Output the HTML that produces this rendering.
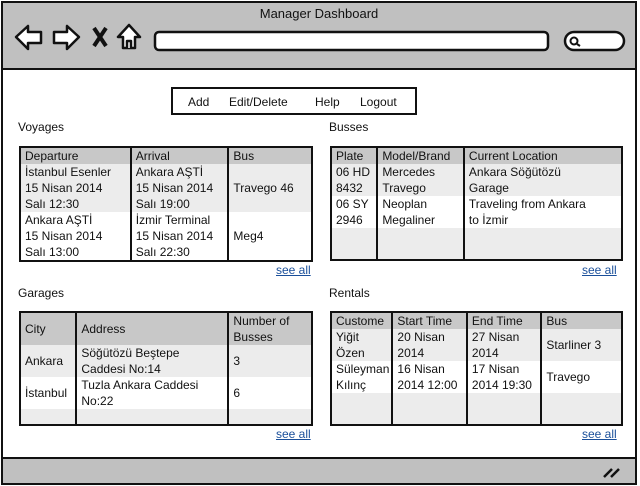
<!DOCTYPE html>
<html><head><meta charset="utf-8"><style>
*{margin:0;padding:0;box-sizing:border-box}
body{width:640px;height:486px;background:#fff;position:relative;overflow:hidden;font-family:"Liberation Sans",sans-serif;font-size:12px;color:#111}
.a{position:absolute}
.win{left:1px;top:1px;width:636px;height:484px;border:2px solid #111;background:#fff}
.hdr{left:3px;top:3px;width:632px;height:67px;background:#c0c0c0;border-bottom:2px solid #111}
.ftr{left:3px;top:457px;width:632px;height:26px;background:#c0c0c0;border-top:2px solid #111}
table{position:absolute;border-collapse:collapse;table-layout:fixed;border:2px solid #111;font-size:12px}
td{border-left:2px solid #111;padding:0 0 0 4px;line-height:16px;vertical-align:middle;white-space:nowrap;overflow:hidden}
td:first-child{border-left:none}
tr.h td{background:#c8c8c8}
tr.g td{background:#ececec}
tr.w td{background:#fff}
.lbl{font-size:12px}
.see{color:#1a4f9a;text-decoration:underline;font-size:12px}
</style></head><body>
<div class="a win"></div>
<div class="a hdr"></div>
<div class="a ftr"></div>
<div class="a" style="left:0;width:638px;top:6px;text-align:center;font-size:13px">Manager Dashboard</div>
<svg class="a" style="left:0;top:0" width="640" height="486">
<g fill="#fff" stroke="#111" stroke-width="2.5" stroke-linejoin="round">
<path d="M16 37 L28 26 L28 32 L41 32 L41 43 L28 43 L28 49 Z"/>
<path d="M79 37 L67 26 L67 32 L54 32 L54 43 L67 43 L67 49 Z"/>
<path d="M129 25 L118 37 L123 37 L123 48 L135 48 L135 37 L140 37 Z"/>
<path d="M127 48 L127 41 L131 41 L131 48"/>
<rect x="155" y="32" width="393" height="18" rx="4"/>
<rect x="565" y="32" width="59" height="18" rx="9"/>
<circle cx="574" cy="41" r="3.5" fill="none" stroke-width="2"/>
</g>
<path d="M94 28 L106 46 M106 28 L94 46" stroke="#111" stroke-width="4"/>
<path d="M577 44 L580 46" stroke="#111" stroke-width="2"/>
<rect x="172" y="88" width="244" height="26" fill="#fff" stroke="#111" stroke-width="2"/>
<path d="M604 477 L612 469 M611 477 L619 469" stroke="#111" stroke-width="2.5"/>
</svg>
<div class="a" style="left:188px;top:95px">Add</div>
<div class="a" style="left:229px;top:95px">Edit/Delete</div>
<div class="a" style="left:315px;top:95px">Help</div>
<div class="a" style="left:360px;top:95px">Logout</div>

<div class="a lbl" style="left:18px;top:120px">Voyages</div>
<div class="a lbl" style="left:329px;top:120px">Busses</div>
<div class="a lbl" style="left:18px;top:286px">Garages</div>
<div class="a lbl" style="left:329px;top:286px">Rentals</div>

<table style="left:19px;top:146px;width:294px">
<colgroup><col style="width:110px"><col style="width:97px"><col style="width:83px"></colgroup>
<tr class="h" style="height:17px"><td>Departure</td><td>Arrival</td><td>Bus</td></tr>
<tr class="g" style="height:48px"><td>İstanbul Esenler<br>15 Nisan 2014<br>Salı 12:30</td><td>Ankara AŞTİ<br>15 Nisan 2014<br>Salı 19:00</td><td>Travego 46</td></tr>
<tr class="w" style="height:47px"><td>Ankara AŞTİ<br>15 Nisan 2014<br>Salı 13:00</td><td>İzmir Terminal<br>15 Nisan 2014<br>Salı 22:30</td><td>Meg4</td></tr>
</table>

<table style="left:330px;top:146px;width:293px">
<colgroup><col style="width:46px"><col style="width:86px"><col style="width:157px"></colgroup>
<tr class="h" style="height:17px"><td>Plate</td><td>Model/Brand</td><td>Current Location</td></tr>
<tr class="g" style="height:32px"><td>06 HD<br>8432</td><td>Mercedes<br>Travego</td><td>Ankara Söğütözü<br>Garage</td></tr>
<tr class="w" style="height:32px"><td>06 SY<br>2946</td><td>Neoplan<br>Megaliner</td><td>Traveling from Ankara<br>to İzmir</td></tr>
<tr class="g" style="height:32px"><td></td><td></td><td></td></tr>
</table>

<div class="a see" style="left:276px;top:263px">see all</div>
<div class="a see" style="left:582px;top:263px">see all</div>

<table style="left:19px;top:311px;width:294px">
<colgroup><col style="width:56px"><col style="width:151px"><col style="width:83px"></colgroup>
<tr class="h" style="height:33px"><td>City</td><td>Address</td><td>Number of<br>Busses</td></tr>
<tr class="g" style="height:32px"><td>Ankara</td><td>Söğütözü Beştepe<br>Caddesi No:14</td><td>3</td></tr>
<tr class="w" style="height:32px"><td>İstanbul</td><td>Tuzla Ankara Caddesi<br>No:22</td><td>6</td></tr>
<tr class="g" style="height:16px"><td></td><td></td><td></td></tr>
</table>

<table style="left:330px;top:311px;width:293px">
<colgroup><col style="width:61px"><col style="width:74px"><col style="width:74px"><col style="width:80px"></colgroup>
<tr class="h" style="height:17px"><td>Custome</td><td>Start Time</td><td>End Time</td><td>Bus</td></tr>
<tr class="g" style="height:32px"><td>Yiğit<br>Özen</td><td>20 Nisan<br>2014</td><td>27 Nisan<br>2014</td><td>Starliner 3</td></tr>
<tr class="w" style="height:32px"><td>Süleyman<br>Kılınç</td><td>16 Nisan<br>2014 12:00</td><td>17 Nisan<br>2014 19:30</td><td>Travego</td></tr>
<tr class="g" style="height:32px"><td></td><td></td><td></td><td></td></tr>
</table>

<div class="a see" style="left:276px;top:427px">see all</div>
<div class="a see" style="left:582px;top:427px">see all</div>
</body></html>
